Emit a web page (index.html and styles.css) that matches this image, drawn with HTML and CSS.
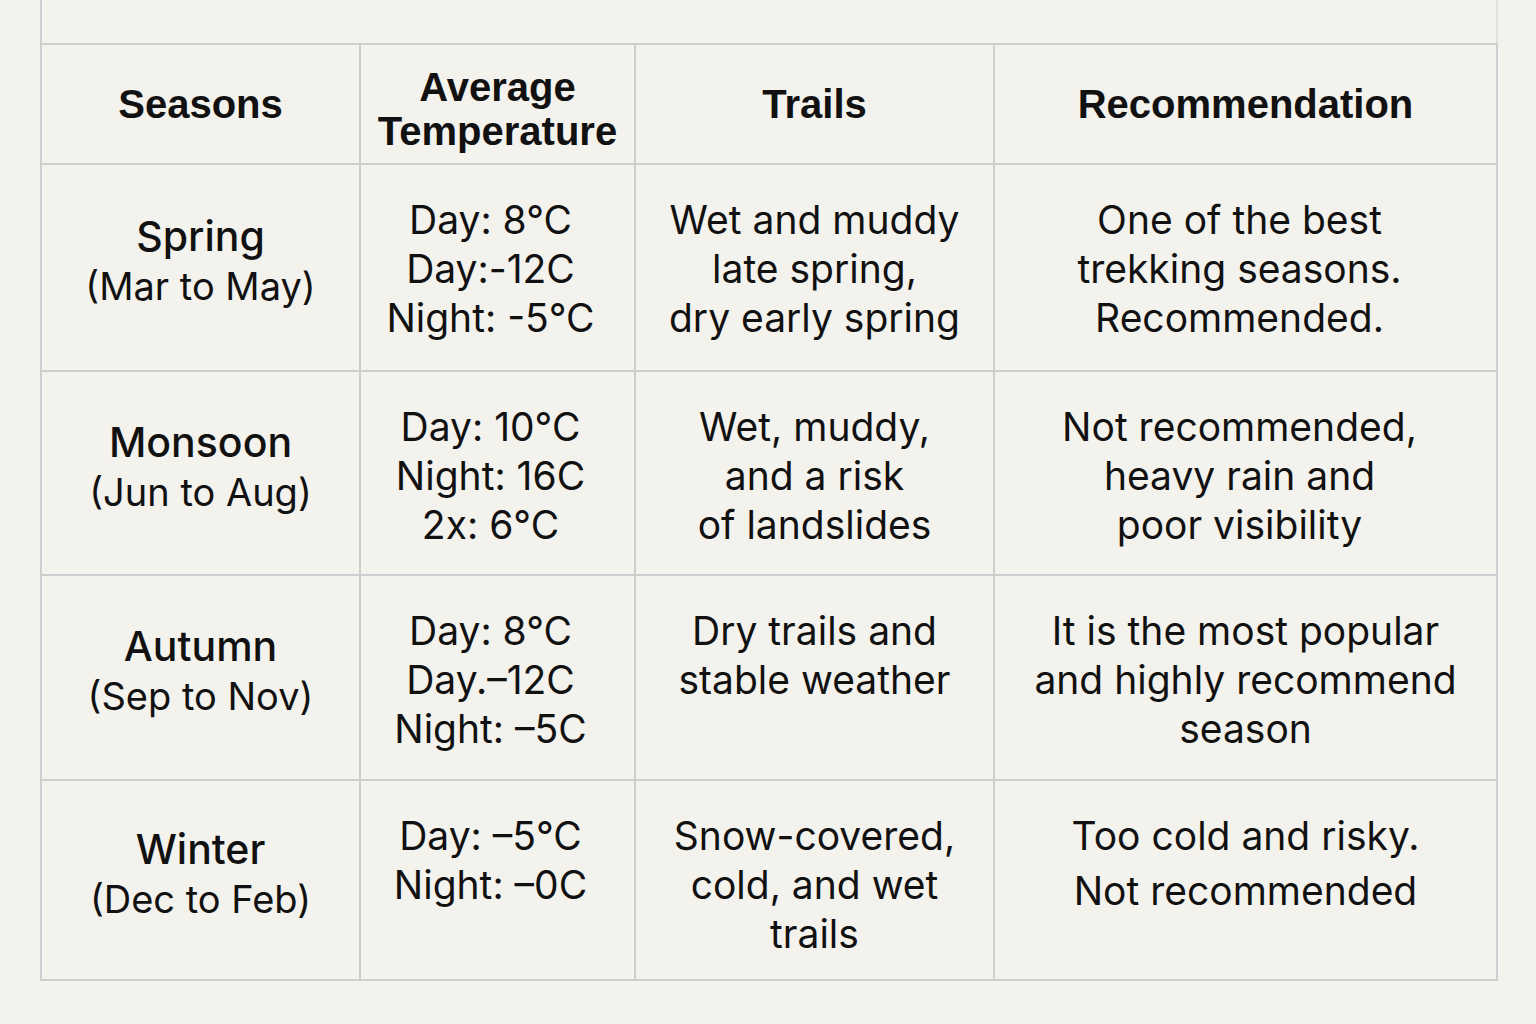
FILE: index.html
```html
<!DOCTYPE html>
<html lang="en">
<head>
<meta charset="utf-8">
<title>Trekking Seasons</title>
<link rel="stylesheet" href="styles.css">
</head>
<body>
<div class="page">
  <table class="seasons">
    <colgroup>
      <col class="c1"><col class="c2"><col class="c3"><col class="c4">
    </colgroup>
    <tr class="ghost">
      <td class="g1"></td><td class="g2"></td><td class="g3"></td><td class="g4"></td>
    </tr>
    <tr class="head">
      <th>Seasons</th>
      <th class="two">Average<br>Temperature</th>
      <th>Trails</th>
      <th>Recommendation</th>
    </tr>
    <tr class="r1">
      <td class="season"><span class="name">Spring</span><br>(Mar to May)</td>
      <td class="temp">Day: 8°C<br>Day:-12C<br>Night: -5°C</td>
      <td>Wet and muddy<br>late spring,<br>dry early spring</td>
      <td class="rec">One of the best<br>trekking seasons.<br>Recommended.</td>
    </tr>
    <tr class="r2">
      <td class="season"><span class="name">Monsoon</span><br>(Jun to Aug)</td>
      <td class="temp">Day: 10°C<br>Night: 16C<br>2x: 6°C</td>
      <td>Wet, muddy,<br>and a risk<br>of landslides</td>
      <td class="rec">Not recommended,<br>heavy rain and<br>poor visibility</td>
    </tr>
    <tr class="r3">
      <td class="season"><span class="name">Autumn</span><br>(Sep to Nov)</td>
      <td class="temp">Day: 8°C<br>Day.–12C<br>Night: –5C</td>
      <td>Dry trails and<br>stable weather</td>
      <td>It is the most popular<br>and highly recommend<br>season</td>
    </tr>
    <tr class="r4">
      <td class="season"><span class="name">Winter</span><br>(Dec to Feb)</td>
      <td class="temp">Day: –5°C<br>Night: –0C</td>
      <td>Snow-covered,<br>cold, and wet<br>trails</td>
      <td class="wide">Too cold and risky.<br>Not recommended</td>
    </tr>
  </table>
</div>
</body>
</html>
```

FILE: styles.css
```css
html, body {
  margin: 0;
  padding: 0;
  background: #f4f2ed;
}

body {
  width: 1536px;
  height: 1024px;
  overflow: hidden;
  font-family: Inter, "Noto Sans", "Liberation Sans", sans-serif;
  color: #111111;
}

.page {
  padding-left: 40px;
}

.seasons {
  border-collapse: collapse;
  table-layout: fixed;
  width: 1456px;
}

.c1 { width: 319px; }
.c2 { width: 275px; }
.c3 { width: 359px; }
.c4 { width: 503px; }

.seasons th,
.seasons td {
  border: 2px solid #cdcecf;
  padding: 0;
  text-align: center;
}

.seasons .ghost td {
  height: 43px;
  padding: 0;
  border-top: none;
  border-color: transparent;
  border-bottom-color: #cdcecf;
}

.seasons .ghost .g1 { border-left-color: #cdcecf; }
.seasons .ghost .g2 { border-left-color: #e3e3e1; }
.seasons .ghost .g3 { border-left-color: #e6e6e4; }
.seasons .ghost .g4 { border-left-color: #e3e3e1; border-right-color: #e0e0df; }

.head th {
  height: 118px;
  font-family: "Liberation Sans", Arial, sans-serif;
  font-weight: 700;
  font-size: 40px;
  line-height: 44px;
  vertical-align: middle;
}

.head th.two {
  height: 108px;
  padding-top: 10px;
}

.seasons td {
  font-size: 39px;
  line-height: 49px;
  font-weight: 400;
  vertical-align: top;
  padding-top: 30px;
}

.seasons td.temp {
  padding-right: 14px;
}

.seasons td.rec {
  padding-right: 12px;
}

.r1 td { height: 175px; }
.r2 td { height: 172px; }
.r3 td { height: 173px; }
.r4 td { height: 168px; }

.seasons td.season {
  vertical-align: middle;
  padding-top: 0;
  padding-bottom: 12px;
  font-size: 38px;
}

.season .name {
  font-weight: 500;
  font-size: 41px;
}

.seasons td.wide {
  line-height: 55px;
  padding-top: 27px;
}
```
